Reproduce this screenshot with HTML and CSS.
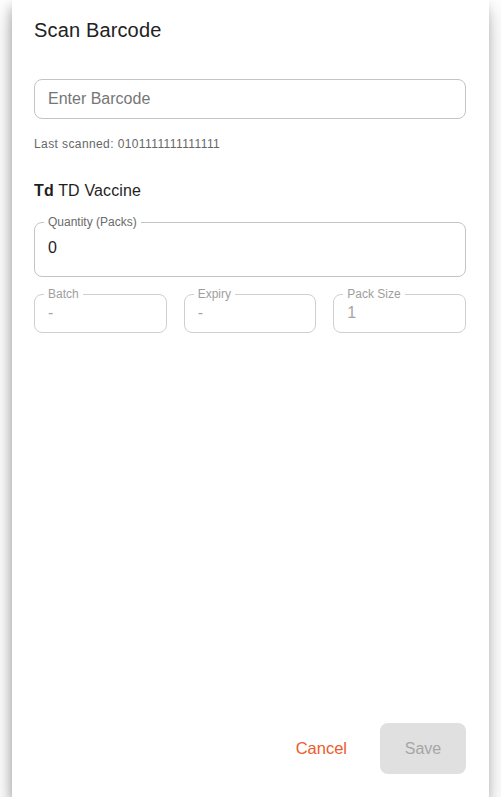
FILE: index.html
```html
<!DOCTYPE html>
<html>
<head>
<meta charset="utf-8">
<link rel="stylesheet" href="styles.css">
</head>
<body>
<div class="dialog">
  <h1 class="title">Scan Barcode</h1>
  <div class="content">
    <div class="barcode-input">Enter Barcode</div>
    <div class="last-scanned">Last scanned: 0101111111111111</div>
    <div class="item-name"><b>Td</b> TD Vaccine</div>
    <fieldset class="field field-main">
      <legend>Quantity (Packs)</legend>
      <div class="value">0</div>
    </fieldset>
    <div class="row">
      <fieldset class="field field-small disabled">
        <legend>Batch</legend>
        <div class="value">-</div>
      </fieldset>
      <fieldset class="field field-small disabled">
        <legend>Expiry</legend>
        <div class="value">-</div>
      </fieldset>
      <fieldset class="field field-small disabled">
        <legend>Pack Size</legend>
        <div class="value">1</div>
      </fieldset>
    </div>
  </div>
  <div class="actions">
    <button class="btn-cancel">Cancel</button>
    <button class="btn-save">Save</button>
  </div>
</div>
</body>
</html>
```

FILE: styles.css
```css
html, body {
  margin: 0;
  padding: 0;
  background: #ffffff;
}
body {
  font-family: "Liberation Sans", Arial, sans-serif;
  color: #1f1f1f;
  overflow: hidden;
}
.dialog {
  margin-left: 12px;
  width: 477px;
  height: 797px;
  background: #fff;
  box-shadow: 0 9px 12px -6px rgba(0,0,0,0.25), 0 12px 24px 2px rgba(0,0,0,0.16), -2px 6px 10px rgba(0,0,0,0.18);
  display: flex;
  flex-direction: column;
  box-sizing: border-box;
  padding: 0 23px 0 22px;
}
.title {
  margin: 0;
  padding-top: 18px;
  font-size: 20px;
  font-weight: 400;
  line-height: 24px;
  letter-spacing: 0.15px;
  color: #222;
}
.content {
  flex: 1;
  display: flex;
  flex-direction: column;
}
.barcode-input {
  margin-top: 37px;
  height: 40px;
  box-sizing: border-box;
  border: 1px solid #c4c4c4;
  border-radius: 8px;
  padding: 0 13px;
  display: flex;
  align-items: center;
  font-size: 16px;
  color: #767676;
}
.last-scanned {
  margin-top: 17px;
  font-size: 12px;
  line-height: 16px;
  letter-spacing: 0.4px;
  color: #666;
}
.item-name {
  margin-top: 30px;
  font-size: 16px;
  line-height: 18px;
  letter-spacing: 0.15px;
  color: #1f1f1f;
}
.item-name b {
  font-weight: 700;
}
.field {
  margin: 0;
  box-sizing: border-box;
  border: 1px solid #c4c4c4;
  border-radius: 8px;
  padding: 0 13px;
  min-width: 0;
}
.field legend {
  font-size: 12px;
  line-height: 14px;
  padding: 0 4px;
  margin-left: -4px;
  color: #6b6b6b;
}
.field-main {
  margin-top: 15px;
  height: 62px;
}
.field-main .value {
  font-size: 16px;
  line-height: 20px;
  color: #1f1f1f;
  margin-top: 9px;
}
.row {
  margin-top: 10px;
  display: grid;
  grid-template-columns: repeat(3, 1fr);
  gap: 17px;
}
.field-small {
  height: 46px;
}
.field.disabled {
  border-color: #cfcfcf;
}
.field.disabled legend {
  color: #9e9e9e;
}
.field-small .value {
  font-size: 16px;
  line-height: 20px;
  color: #a6a6a6;
  margin-top: 2px;
}
.actions {
  display: flex;
  justify-content: flex-end;
  align-items: center;
  gap: 33px;
  padding-bottom: 23px;
}
.btn-cancel {
  background: none;
  border: none;
  padding: 0;
  font-family: "Liberation Sans", Arial, sans-serif;
  font-size: 16.5px;
  color: #ee5a2b;
}
.btn-save {
  width: 86px;
  height: 51px;
  border: none;
  border-radius: 8px;
  background: #e0e0e0;
  font-family: "Liberation Sans", Arial, sans-serif;
  font-size: 16px;
  color: #a6a6a6;
}
```
